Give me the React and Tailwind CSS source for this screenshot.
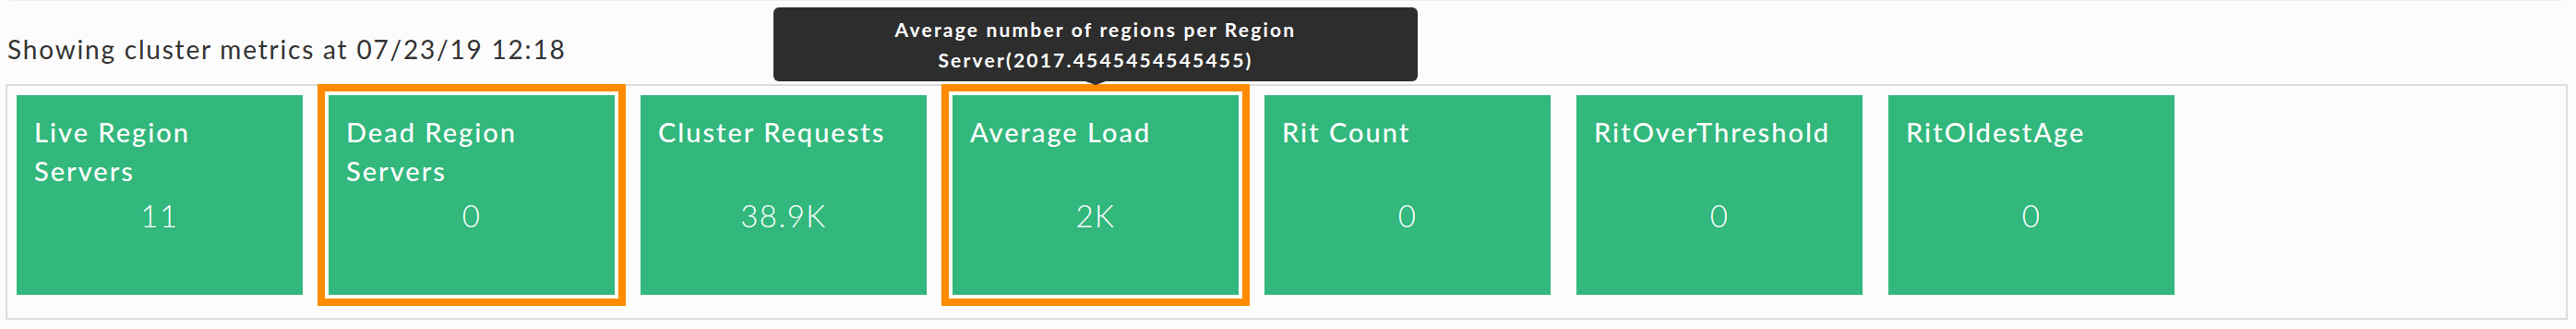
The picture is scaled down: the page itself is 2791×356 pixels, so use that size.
import React from 'react';

const metrics = [
  { title: 'Live Region Servers', value: '11' },
  { title: 'Dead Region Servers', value: '0', highlight: true },
  { title: 'Cluster Requests', value: '38.9K' },
  {
    title: 'Average Load',
    value: '2K',
    highlight: true,
    tooltip: 'Average number of regions per Region Server(2017.4545454545455)',
  },
  { title: 'Rit Count', value: '0' },
  { title: 'RitOverThreshold', value: '0' },
  { title: 'RitOldestAge', value: '0' },
];

function Tile({ title, value, highlight, tooltip }) {
  return (
    <div
      className={
        'relative w-[310px] h-[216px] shrink-0 bg-[#32b77c] text-white px-[19px] pt-[19px] ' +
        (highlight ? 'shadow-[0_0_0_4px_#ffffff,0_0_0_12px_#ff8c00]' : '')
      }
    >
      <div className="h-[84px] text-[29px] leading-[42px] font-medium tracking-[2px]">{title}</div>
      <div className="mt-[3px] text-center text-[33px] leading-[48px] font-light tracking-[1.5px]">{value}</div>

      {tooltip && (
        <div className="absolute left-1/2 -translate-x-1/2 bottom-[calc(100%+11px)] w-[698px] z-10">
          <div className="bg-[#2d2d2d] rounded-[6px] px-[16px] py-[7px] text-center text-white text-[21px] leading-[33px] font-bold tracking-[2.2px]">
            {tooltip}
          </div>
          <div className="mx-auto w-0 h-0 border-x-[11px] border-x-transparent border-t-[4px] border-t-[#2d2d2d]" />
        </div>
      )}
    </div>
  );
}

export default function App() {
  return (
    <div className="relative w-full h-[356px] bg-[#fcfcfc] font-['Lato','Liberation_Sans',sans-serif]">
      <div className="ml-[11px] mr-[15px] h-px bg-[#efefef]" />
      <div className="mt-[31px] pl-[8px] text-[28px] leading-[42px] text-[#333333] tracking-[1.8px]">
        Showing cluster metrics at 07/23/19 12:18
      </div>
      <div className="mt-[17px] ml-[6px] mr-[9px] border-2 border-[#dcdcdc] pt-[10px] pl-[10px] pb-[25px]">
        <div className="flex gap-[28px]">
          {metrics.map((m) => (
            <Tile key={m.title} {...m} />
          ))}
        </div>
      </div>
    </div>
  );
}
